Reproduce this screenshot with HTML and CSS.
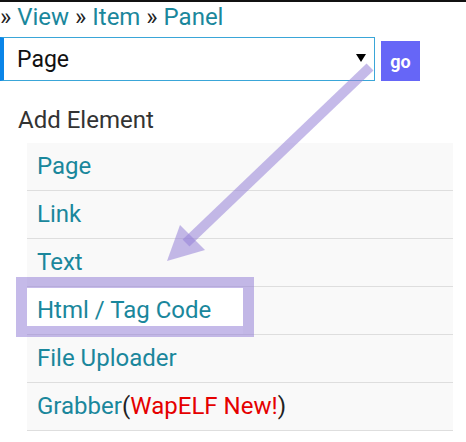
FILE: index.html
```html
<!DOCTYPE html>
<html lang="en">
<head>
    <meta charset="UTF-8">
    <meta name="viewport" content="width=device-width, initial-scale=1.0">
    <title>Add Element</title>
    <link rel="stylesheet" href="styles.css">
</head>
<body>
    <div class="page">
        <div class="crumbs">
            &raquo; <a href="#">View</a> &raquo; <a href="#">Item</a> &raquo; <a href="#">Panel</a>
        </div>

        <form class="pick" action="#" method="GET">
            <div class="select-wrap">
                <select name="type">
                    <option value="page">Page</option>
                    <option value="link">Link</option>
                    <option value="text">Text</option>
                    <option value="html">Html / Tag Code</option>
                    <option value="file">File Uploader</option>
                    <option value="grabber">Grabber</option>
                </select>
            </div>
            <button type="submit" class="go">go</button>
        </form>

        <div class="title">Add Element</div>
        <ul class="list">
            <li><a href="#">Page</a></li>
            <li><a href="#">Link</a></li>
            <li><a href="#">Text</a></li>
            <li class="marked"><a href="#">Html / Tag Code</a></li>
            <li><a href="#">File Uploader</a></li>
            <li><a href="#">Grabber</a>(<span class="new">WapELF New!</span>)</li>
        </ul>

        <!-- annotation drawn over the page -->
        <svg class="note" width="466" height="442" viewBox="0 0 466 442">
            <line x1="370" y1="67" x2="186" y2="243" stroke="rgba(150,130,215,0.55)" stroke-width="10"/>
            <polygon points="167,261 180,225 205,250" fill="rgba(150,130,215,0.55)"/>
            <rect x="21.5" y="282.5" width="227" height="49" fill="none" stroke="rgba(150,130,215,0.55)" stroke-width="11"/>
        </svg>
    </div>
</body>
</html>
```

FILE: styles.css
```css
body {
    margin: 0;
    font-family: Roboto, "Liberation Sans", sans-serif;
    background: white;
    color: #222;
}
.page {
    position: relative;
    width: 466px;
    height: 442px;
    border-top: 2px solid #111;
    box-sizing: border-box;
    overflow: hidden;
}
a {
    color: #1a879c;
    text-decoration: none;
}
.crumbs {
    font-size: 24px;
    line-height: 28px;
    padding: 1px 0 0 0;
    color: #222;
}
.pick {
    display: flex;
    align-items: center;
    gap: 6px;
    margin-top: 6px;
}
.select-wrap {
    position: relative;
    width: 375px;
}
.select-wrap::after {
    content: "";
    position: absolute;
    right: 9px;
    top: 17px;
    border-left: 5px solid transparent;
    border-right: 5px solid transparent;
    border-top: 8px solid #000;
    pointer-events: none;
}
select {
    appearance: none;
    -webkit-appearance: none;
    display: block;
    width: 100%;
    height: 44px;
    box-sizing: border-box;
    border: 1px solid #3aa6d8;
    border-left: 4px solid #0a85e8;
    border-radius: 0;
    background: white;
    font-family: Roboto, "Liberation Sans", sans-serif;
    font-size: 23px;
    color: #111;
    padding: 0 0 0 13px;
    outline: none;
}
.go {
    width: 39px;
    height: 40px;
    margin-top: 4px;
    border: none;
    background: #6666f7;
    color: white;
    font-family: Roboto, "Liberation Sans", sans-serif;
    font-weight: bold;
    font-size: 18px;
    padding: 0;
}
.title {
    font-size: 24px;
    color: #333;
    margin: 25px 0 0 18px;
    line-height: 28px;
}
.list {
    list-style: none;
    margin: 9px 13px 0 27px;
    padding: 0;
    background: #f9f9f9;
}
.list li {
    height: 47px;
    line-height: 46px;
    padding-left: 10px;
    font-size: 24px;
    color: #222;
    border-bottom: 1px solid #dedede;
}
.list li.marked {
    background: linear-gradient(to right, white 216px, #f9f9f9 216px);
}
.new {
    color: #e50000;
}
.note {
    position: absolute;
    left: 0;
    top: -2px;
    pointer-events: none;
}
```
